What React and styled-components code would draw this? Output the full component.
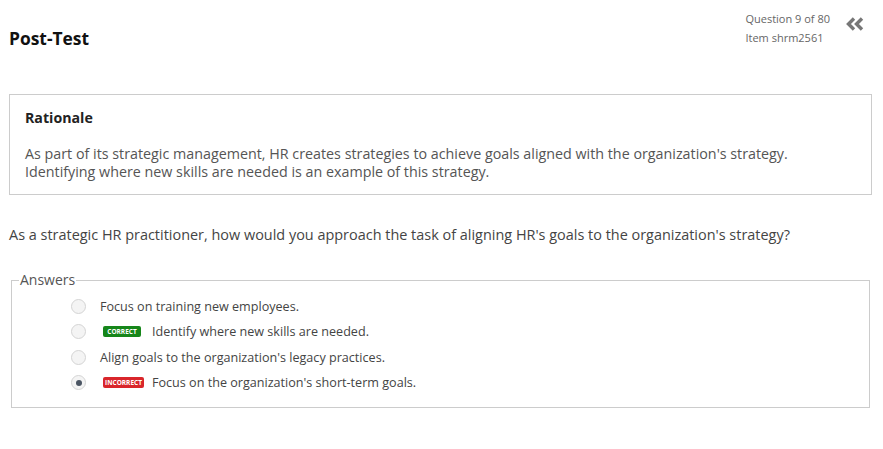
import React from "react";
import styled, { createGlobalStyle } from "styled-components";

const GlobalStyle = createGlobalStyle`
  body {
    margin: 0;
    background: #fff;
    font-family: "Open Sans", "Liberation Sans", sans-serif;
  }
`;

const answers = [
  { text: "Focus on training new employees." },
  { text: "Identify where new skills are needed.", badge: "correct" },
  { text: "Align goals to the organization's legacy practices." },
  { text: "Focus on the organization's short-term goals.", badge: "incorrect", checked: true },
];

const App = () => {
  return (
    <>
      <GlobalStyle />
      <Page>
        <Header>
          <Title>Post-Test</Title>
          <Meta>
            <MetaText>
              <div>Question 9 of 80</div>
              <div>Item shrm2561</div>
            </MetaText>
            <Collapse viewBox="0 0 20 14" width="20" height="14">
              <polyline points="9,1.5 3.5,7 9,12.5" />
              <polyline points="17,1.5 11.5,7 17,12.5" />
            </Collapse>
          </Meta>
        </Header>

        <Rationale>
          <RationaleTitle>Rationale</RationaleTitle>
          <RationaleBody>
            As part of its strategic management, HR creates strategies to achieve goals aligned with the
            organization's strategy.
            <br />
            Identifying where new skills are needed is an example of this strategy.
          </RationaleBody>
        </Rationale>

        <Question>
          As a strategic HR practitioner, how would you approach the task of aligning HR's goals to the
          organization's strategy?
        </Question>

        <Answers>
          <Legend>Answers</Legend>
          {answers.map((a, i) => (
            <Row key={i}>
              <Radio checked={a.checked} />
              {a.badge && (
                <Badge $kind={a.badge}>{a.badge === "correct" ? "Correct" : "Incorrect"}</Badge>
              )}
              <AnswerText>{a.text}</AnswerText>
            </Row>
          ))}
        </Answers>
      </Page>
    </>
  );
};

const Page = styled.div`
  padding: 0 11px 0 9px;
`;

const Header = styled.div`
  height: 94px;
  display: flex;
  justify-content: space-between;
  align-items: flex-start;
`;

const Title = styled.h1`
  margin: 26px 0 0;
  font-size: 17.4px;
  line-height: 24px;
  font-weight: 700;
  color: #111;
`;

const Meta = styled.div`
  display: flex;
  align-items: flex-start;
  gap: 15px;
  padding-top: 9px;
  margin-right: 7px;
`;

const MetaText = styled.div`
  font-size: 11px;
  line-height: 19px;
  color: #666;
`;

const Collapse = styled.svg`
  margin-top: 8px;
  fill: none;
  stroke: #777;
  stroke-width: 3.4;
`;

const Rationale = styled.div`
  border: 1px solid #ccc;
  padding: 13px 15px 13px 15px;
`;

const RationaleTitle = styled.div`
  font-size: 14.2px;
  line-height: 20px;
  font-weight: 700;
  color: #222;
  margin-bottom: 17px;
`;

const RationaleBody = styled.div`
  font-size: 14.3px;
  line-height: 18px;
  color: #555;
`;

const Question = styled.p`
  margin: 30px 0 0;
  font-size: 14.45px;
  line-height: 20px;
  color: #444;
`;

const Answers = styled.fieldset`
  margin: 26px 2px 0;
  padding: 5px 7px 12px 59px;
  border: 1px solid #ccc;
`;

const Legend = styled.legend`
  margin-left: -52px;
  padding: 0 1px;
  font-size: 14px;
  line-height: 18px;
  color: #555;
`;

const Row = styled.div`
  display: flex;
  align-items: center;
  height: 25.3px;
`;

const Radio = styled.span`
  box-sizing: border-box;
  width: 15px;
  height: 15px;
  border-radius: 50%;
  border: 1px solid #d4d4d4;
  background: #f4f4f4;
  margin-right: 14px;
  flex: none;
  display: flex;
  align-items: center;
  justify-content: center;
  &::after {
    content: "";
    width: 6px;
    height: 6px;
    border-radius: 50%;
    background: ${(p) => (p.checked ? "#4b5563" : "transparent")};
  }
`;

const Badge = styled.span`
  box-sizing: border-box;
  width: ${(p) => (p.$kind === "correct" ? "38px" : "41px")};
  margin: 0 ${(p) => (p.$kind === "correct" ? "11px" : "8px")} 0 3px;
  height: 11px;
  border-radius: 2px;
  background: ${(p) => (p.$kind === "correct" ? "#16861a" : "#d9262b")};
  color: #fff;
  font-size: 6.5px;
  line-height: 11px;
  font-weight: 700;
  text-transform: uppercase;
  text-align: center;
  flex: none;
`;

const AnswerText = styled.span`
  font-size: 12.6px;
  color: #444;
`;

export default App;
